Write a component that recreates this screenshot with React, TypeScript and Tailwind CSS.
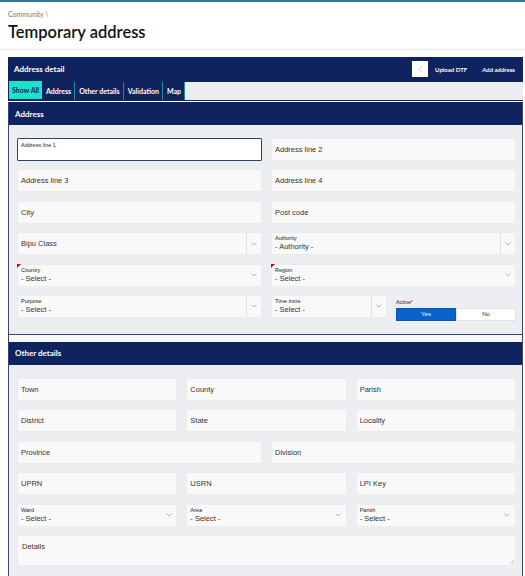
import { ReactNode } from 'react';

const NAVY = 'bg-[#0f245e]';

const Chevron = () => (
  <svg width="6" height="4" viewBox="0 0 6 4" fill="none">
    <polyline points="0.5,0.5 3,3 5.5,0.5" stroke="#9a9a9a" strokeWidth="0.7" />
  </svg>
);

interface TextBoxProps {
  text: string;
  focused?: boolean;
  tall?: boolean;
}

const TextBox = ({ text, focused, tall }: TextBoxProps) => {
  if (focused) {
    return (
      <div className="h-[23px] bg-white border border-[#2d3f7c] rounded-[1px] px-[3px] pt-[3px] text-[5.5px] leading-[7px] text-[#222]">
        {text}
      </div>
    );
  }
  if (tall) {
    return (
      <div className="relative h-[31px] bg-[#f9f9f9] border border-[#ececec] px-[4px] pt-[6px] text-[7.5px] leading-[10px] text-[#333]">
        {text}
        <svg className="absolute right-[1px] bottom-[1px]" width="5" height="5" viewBox="0 0 5 5">
          <line x1="1" y1="5" x2="5" y2="1" stroke="#999" strokeWidth="0.5" />
          <line x1="3" y1="5" x2="5" y2="3" stroke="#999" strokeWidth="0.5" />
        </svg>
      </div>
    );
  }
  return (
    <div className="h-[23px] bg-[#f9f9f9] border border-[#ececec] flex items-center px-[3px] text-[7.5px] text-[#333]">
      {text}
    </div>
  );
};

interface SelectProps {
  label?: string;
  value: string;
  sep?: boolean;
  required?: boolean;
  className?: string;
}

const Select = ({ label, value, sep, required, className = '' }: SelectProps) => (
  <div className={`relative h-[23px] bg-[#f9f9f9] border border-[#ececec] flex ${className}`}>
    {required && (
      <span className="absolute -left-[1px] -top-[1px] w-0 h-0 border-t-[4px] border-r-[4px] border-t-[#d40000] border-r-transparent" />
    )}
    <div className="flex-1 flex flex-col justify-center px-[3px] min-w-0">
      {label && <div className="text-[5.5px] leading-[7px] text-[#222]">{label}</div>}
      <div className="text-[7.5px] leading-[10px] text-[#333] whitespace-nowrap">{value}</div>
    </div>
    <div className={sep ? 'w-[15px] flex items-center justify-center border-l border-[#e2e2e2]' : 'w-[15px] flex items-center justify-center'}>
      <Chevron />
    </div>
  </div>
);

const SectionHeader = ({ children }: { children: ReactNode }) => (
  <div className={`${NAVY} h-[23px] flex items-center pl-[6px] text-white text-[8px] font-bold font-['Lato',sans-serif]`}>
    {children}
  </div>
);

const tabs = ['Address', 'Other details', 'Validation', 'Map'];

export default function App() {
  return (
    <div className="min-h-[576px] bg-white font-['Liberation_Sans',Arial,sans-serif]">
      <div className="h-[2px] bg-[#2b7a99]" />
      <div className="px-2 pt-[8px] pb-[6px] font-['Lato',sans-serif]">
        <div className="text-[7px] leading-[9px] text-[#777]">Community \</div>
        <h1 className="text-[16.5px] leading-[24px] font-semibold text-[#111] pt-[1px] h-[24px]">Temporary address</h1>
      </div>
      <div className="border-t border-[#e6e6e6] pt-[7px]">
        <div className="ml-2 mr-[2px]">
          <div className={`${NAVY} h-[24px] flex items-center pl-[6px] pr-[8px] font-['Lato',sans-serif]`}>
            <span className="text-white text-[8px] font-bold flex-1">Address detail</span>
            <div className="w-[16px] h-[16px] bg-white flex items-center justify-center mr-[7px]">
              <svg width="5" height="8" viewBox="0 0 5 8" fill="none">
                <polyline points="4,0.5 1,4 4,7.5" stroke="#bbb" strokeWidth="0.7" />
              </svg>
            </div>
            <span className="text-white text-[6px] font-bold mr-[15px]">Upload DTF</span>
            <span className="text-white text-[6px] font-bold">Add address</span>
          </div>
          <div className={`${NAVY} flex h-[20px] font-['Lato',sans-serif] text-[7px] font-bold`}>
            <div className="bg-[#19e3c9] text-[#0f245e] px-[3px] ml-px flex items-center mb-[2px]">Show All</div>
            {tabs.map((t) => (
              <div key={t} className="flex items-center pl-[4px] pr-[3px] text-white border-r border-[#1f8aa5] my-[1px]">
                {t}
              </div>
            ))}
            <div className="flex-1 bg-[#eceef1] my-[1px]" />
          </div>

          <div className="mt-px border-x border-b border-[#33437c]">
            <SectionHeader>Address</SectionHeader>
            <div className="bg-[#eceef1] pl-2 pr-[6px] pt-[13px] pb-[13px] grid grid-cols-2 gap-x-[9px] gap-y-[8.4px]">
              <TextBox text="Address line 1" focused />
              <TextBox text="Address line 2" />
              <TextBox text="Address line 3" />
              <TextBox text="Address line 4" />
              <TextBox text="City" />
              <TextBox text="Post code" />
              <Select value="Bipu Class" sep />
              <Select label="Authority" value="- Authority -" sep />
              <Select label="Country" value="- Select -" required />
              <Select label="Region" value="- Select -" required />
              <Select label="Purpose" value="- Select -" sep />
              <div className="flex gap-[9px]">
                <Select label="Time zone" value="- Select -" sep className="w-[116px]" />
                <div className="flex-1 pt-[4px]">
                  <div className="text-[5.5px] leading-[7px] text-[#222]">
                    Active<span className="text-[#d40000] align-top text-[4.5px]">*</span>
                  </div>
                  <div className="flex h-[13px] mt-[2px] text-[6px]">
                    <div className="flex-1 bg-[#0a63c9] border border-[#0a55ad] text-white flex items-center justify-center">Yes</div>
                    <div className="flex-1 bg-white border border-[#e2e2e2] text-[#333] flex items-center justify-center">No</div>
                  </div>
                </div>
              </div>
            </div>
          </div>

          <div className="h-[7px] bg-[#f7f8fa] border-x border-[#33437c]" />

          <div className="border-x border-[#33437c]">
            <SectionHeader>Other details</SectionHeader>
            <div className="bg-[#eceef1] pl-2 pr-[6px] pt-[13px] pb-[13px] flex flex-col gap-y-[8.4px]">
              <div className="grid grid-cols-3 gap-x-[9px]">
                <TextBox text="Town" />
                <TextBox text="County" />
                <TextBox text="Parish" />
              </div>
              <div className="grid grid-cols-3 gap-x-[9px]">
                <TextBox text="District" />
                <TextBox text="State" />
                <TextBox text="Locality" />
              </div>
              <div className="grid grid-cols-2 gap-x-[9px]">
                <TextBox text="Province" />
                <TextBox text="Division" />
              </div>
              <div className="grid grid-cols-3 gap-x-[9px]">
                <TextBox text="UPRN" />
                <TextBox text="USRN" />
                <TextBox text="LPI Key" />
              </div>
              <div className="grid grid-cols-3 gap-x-[9px]">
                <Select label="Ward" value="- Select -" />
                <Select label="Area" value="- Select -" />
                <Select label="Parish" value="- Select -" />
              </div>
              <TextBox text="Details" tall />
            </div>
          </div>
        </div>
      </div>
    </div>
  );
}
